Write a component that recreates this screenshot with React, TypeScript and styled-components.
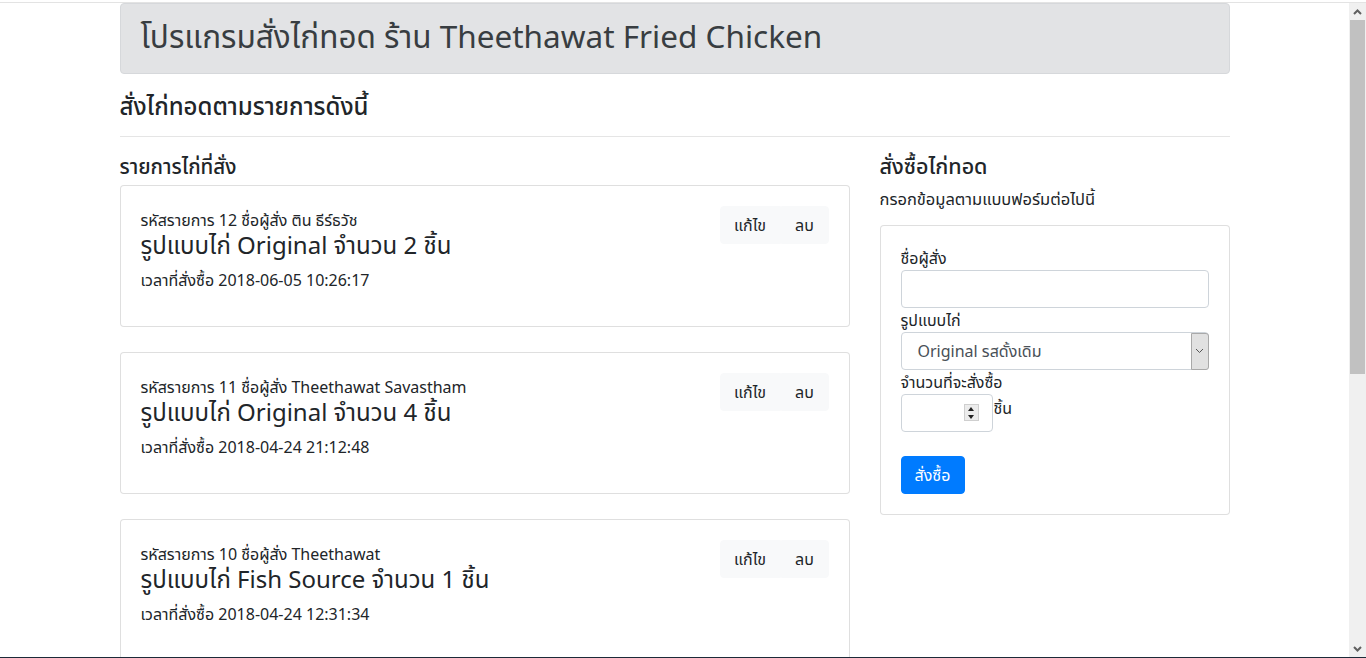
import React from "react";
import styled, { createGlobalStyle } from "styled-components";

const GlobalStyle = createGlobalStyle`
  html, body { margin: 0; padding: 0; overflow: hidden; background: #fff; }
  body {
    font-family: "Noto Sans Thai", "Leelawadee UI", "Segoe UI", "Open Sans", "Noto Sans", Roboto, sans-serif;
    color: #212529;
    font-size: 16px;
    line-height: 1.5;
  }
  * { box-sizing: border-box; }
`;

const Screen = styled.div`
  height: 658px;
  display: flex;
  flex-direction: column;
  border-top: 2px solid #fff;
`;

const TopRule = styled.div`
  height: 1px;
  background: #e3e3e3;
  flex: none;
`;

const BottomRule = styled.div`
  height: 1px;
  background: #1d2a38;
  flex: none;
`;

const Viewport = styled.div`
  flex: 1;
  display: flex;
  min-height: 0;
`;

const Page = styled.div`
  flex: 1;
  overflow: hidden;
`;

const Container = styled.div`
  width: 1110px;
  margin: 0 auto;
`;

const Banner = styled.div`
  background: #e2e3e5;
  border: 1px solid #d6d8db;
  border-radius: 4px;
  padding: 12px 20px;
  margin-bottom: 17px;
`;

const BannerTitle = styled.h1`
  margin: 0;
  font-size: 31.5px;
  line-height: 45px;
  font-weight: 400;
  color: #383d41;
`;

const SubTitle = styled.h4`
  margin: 0;
  padding-top: 3px;
  font-size: 24px;
  line-height: 28.8px;
  font-weight: 500;
`;

const Divider = styled.hr`
  margin: 13px 0 16px;
  border: 0;
  border-top: 1px solid rgba(0, 0, 0, 0.1);
`;

const Columns = styled.div`
  display: grid;
  grid-template-columns: 730px 350px;
  column-gap: 30px;
  align-items: start;
`;

const SectionTitle = styled.h5<{ $size: number }>`
  margin: 0 0 5px;
  padding-top: 3px;
  font-size: ${(p) => p.$size}px;
  line-height: 24px;
  font-weight: 500;
`;

const Card = styled.div<{ $gap?: number }>`
  border: 1px solid rgba(0, 0, 0, 0.125);
  border-radius: 4px;
  padding: 20px;
  margin-bottom: ${(p) => p.$gap ?? 0}px;
  background: #fff;
`;

const OrderBody = styled.div`
  display: flex;
  justify-content: space-between;
  align-items: flex-start;
`;

const OrderText = styled.div`
  padding-top: 3px;
`;

const Meta = styled.div`
  font-size: 16px;
  line-height: 24px;
`;

const OrderTitle = styled.h4`
  margin: 0 0 8px;
  font-size: 24px;
  line-height: 28px;
  font-weight: 400;
`;

const Time = styled.p`
  margin: 0 0 13px;
  font-size: 16px;
  line-height: 24px;
`;

const BtnGroup = styled.div`
  display: inline-flex;
`;

const LightBtn = styled.button<{ $pos: "first" | "last"; $w: number }>`
  font: inherit;
  font-size: 16px;
  line-height: 24px;
  padding: 7px 0 5px;
  width: ${(p) => p.$w}px;
  height: 38px;
  background: #f8f9fa;
  border: 1px solid #f8f9fa;
  color: #212529;
  border-radius: ${(p) => (p.$pos === "first" ? "4px 0 0 4px" : "0 4px 4px 0")};
`;

const Lead = styled.p`
  margin: 0 0 13px;
  padding-top: 3px;
  font-size: 16.5px;
  line-height: 24px;
`;

const Label = styled.label`
  display: block;
  padding-top: 2px;
  font-size: 16px;
  line-height: 22px;
`;

const TextInput = styled.div`
  height: 38px;
  width: 100%;
  border: 1px solid #ced4da;
  border-radius: 4px;
  background: #fff;
`;

const SelectBox = styled.div`
  height: 38px;
  width: 100%;
  border: 1px solid #ced4da;
  border-radius: 4px;
  display: flex;
  align-items: stretch;
  padding-left: 16px;
  font-size: 16px;
  color: #495057;
`;

const SelectText = styled.span`
  flex: 1;
  display: flex;
  align-items: center;
  padding-top: 2px;
`;

const ArrowBox = styled.span`
  width: 18px;
  margin: 0 -1px -1px 0;
  background: #e1e1e1;
  border: 1px solid #a9a9a9;
  border-radius: 0 3px 3px 0;
  display: flex;
  align-items: center;
  justify-content: center;
`;

const QtyRow = styled.div`
  display: flex;
  align-items: flex-start;
`;

const NumberInput = styled.div`
  width: 92px;
  height: 38px;
  border: 1px solid #ced4da;
  border-radius: 4px;
  display: flex;
  align-items: center;
  justify-content: flex-end;
  padding-right: 13px;
`;

const Spinner = styled.span`
  width: 15px;
  height: 17px;
  display: flex;
  flex-direction: column;
  background: #ececec;
  border: 1px solid #cfcfcf;
`;

const SpinHalf = styled.span`
  flex: 1;
  display: flex;
  align-items: center;
  justify-content: center;
`;

const Unit = styled.span`
  font-size: 16px;
  line-height: 24px;
  margin-top: 3px;
  margin-left: 1px;
`;

const SubmitBtn = styled.button`
  margin-top: 24px;
  font: inherit;
  font-size: 16px;
  line-height: 24px;
  padding: 7px 0 5px;
  width: 64px;
  height: 38px;
  background: #007bff;
  border: 1px solid #007bff;
  color: #fff;
  border-radius: 4px;
`;

const Scrollbar = styled.div`
  width: 17px;
  flex: none;
  background: #f0f0f0;
  display: flex;
  flex-direction: column;
`;

const ScrollArrow = styled.div`
  height: 17px;
  display: flex;
  align-items: center;
  justify-content: center;
  flex: none;
`;

const Thumb = styled.div`
  height: 354px;
  margin: 0 1px;
  background: #c1c1c1;
  flex: none;
`;

const ScrollFill = styled.div`
  flex: 1;
`;

const orders = [
  { id: 12, name: "ติน ธีร์ธวัช", type: "Original", qty: 2, time: "2018-06-05 10:26:17" },
  { id: 11, name: "Theethawat Savastham", type: "Original", qty: 4, time: "2018-04-24 21:12:48" },
  { id: 10, name: "Theethawat", type: "Fish Source", qty: 1, time: "2018-04-24 12:31:34" },
];

export default function App() {
  return (
    <>
      <GlobalStyle />
      <Screen>
        <TopRule />
        <Viewport>
          <Page>
            <Container>
              <Banner>
                <BannerTitle>โปรแกรมสั่งไก่ทอด ร้าน Theethawat Fried Chicken</BannerTitle>
              </Banner>
              <SubTitle>สั่งไก่ทอดตามรายการดังนี้</SubTitle>
              <Divider />
              <Columns>
                <div>
                  <SectionTitle $size={20.5}>รายการไก่ที่สั่ง</SectionTitle>
                  {orders.map((o) => (
                    <Card key={o.id} $gap={25}>
                      <OrderBody>
                        <OrderText>
                          <Meta>
                            รหัสรายการ {o.id} ชื่อผู้สั่ง {o.name}
                          </Meta>
                          <OrderTitle>
                            รูปแบบไก่ {o.type} จำนวน {o.qty} ชิ้น
                          </OrderTitle>
                          <Time>เวลาที่สั่งซื้อ {o.time}</Time>
                        </OrderText>
                        <BtnGroup>
                          <LightBtn $pos="first" $w={61}>แก้ไข</LightBtn>
                          <LightBtn $pos="last" $w={48}>ลบ</LightBtn>
                        </BtnGroup>
                      </OrderBody>
                    </Card>
                  ))}
                </div>
                <div>
                  <SectionTitle $size={21.5}>สั่งซื้อไก่ทอด</SectionTitle>
                  <Lead>กรอกข้อมูลตามแบบฟอร์มต่อไปนี้</Lead>
                  <Card>
                    <Label>ชื่อผู้สั่ง</Label>
                    <TextInput />
                    <Label>รูปแบบไก่</Label>
                    <SelectBox>
                      <SelectText>Original รสดั้งเดิม</SelectText>
                      <ArrowBox>
                        <svg width="9" height="6" viewBox="0 0 9 6">
                          <path d="M1 1 L4.5 4.5 L8 1" fill="none" stroke="#555" strokeWidth="1" />
                        </svg>
                      </ArrowBox>
                    </SelectBox>
                    <Label>จำนวนที่จะสั่งซื้อ</Label>
                    <QtyRow>
                      <NumberInput>
                        <Spinner>
                          <SpinHalf>
                            <svg width="6" height="4" viewBox="0 0 6 4">
                              <path d="M0 4 L3 0 L6 4 Z" fill="#222" />
                            </svg>
                          </SpinHalf>
                          <SpinHalf>
                            <svg width="6" height="4" viewBox="0 0 6 4">
                              <path d="M0 0 L3 4 L6 0 Z" fill="#222" />
                            </svg>
                          </SpinHalf>
                        </Spinner>
                      </NumberInput>
                      <Unit>ชิ้น</Unit>
                    </QtyRow>
                    <SubmitBtn>สั่งซื้อ</SubmitBtn>
                  </Card>
                </div>
              </Columns>
            </Container>
          </Page>
          <Scrollbar>
            <ScrollArrow>
              <svg width="9" height="6" viewBox="0 0 9 6">
                <path d="M1 5 L4.5 1.5 L8 5" fill="none" stroke="#606060" strokeWidth="2" />
              </svg>
            </ScrollArrow>
            <Thumb />
            <ScrollFill />
            <ScrollArrow>
              <svg width="9" height="6" viewBox="0 0 9 6">
                <path d="M1 1 L4.5 4.5 L8 1" fill="none" stroke="#606060" strokeWidth="2" />
              </svg>
            </ScrollArrow>
          </Scrollbar>
        </Viewport>
        <BottomRule />
      </Screen>
    </>
  );
}
